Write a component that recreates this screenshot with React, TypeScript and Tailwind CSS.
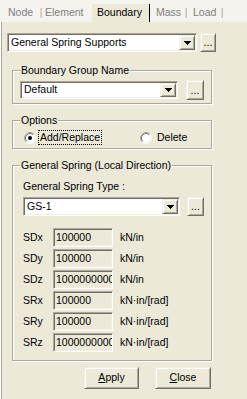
import React from "react";

const SUNKEN =
  "border border-t-[#aca899] border-l-[#aca899] border-b-white border-r-white shadow-[inset_1px_1px_0_#716f64,inset_-1px_-1px_0_#f1efe2] p-[1px]";
const RAISED =
  "border border-t-[#f1efe2] border-l-[#f1efe2] border-b-[#716f64] border-r-[#716f64] shadow-[inset_1px_1px_0_#fff,inset_-1px_-1px_0_#aca899]";
const GROUP = "relative border border-[#aca899] shadow-[inset_1px_1px_0_#fff,1px_1px_0_#fff]";

const SPRINGS = [
  { label: "SDx", value: "100000", unit: "kN/in" },
  { label: "SDy", value: "100000", unit: "kN/in" },
  { label: "SDz", value: "1000000000", unit: "kN/in" },
  { label: "SRx", value: "100000", unit: "kN·in/[rad]" },
  { label: "SRy", value: "100000", unit: "kN·in/[rad]" },
  { label: "SRz", value: "1000000000", unit: "kN·in/[rad]" },
];

function Arrow() {
  return (
    <svg width="7" height="4" viewBox="0 0 7 4" shapeRendering="crispEdges">
      <rect x="0" y="0" width="7" height="1" fill="#000" />
      <rect x="1" y="1" width="5" height="1" fill="#000" />
      <rect x="2" y="2" width="3" height="1" fill="#000" />
      <rect x="3" y="3" width="1" height="1" fill="#000" />
    </svg>
  );
}

function Combo({ value, className }: { value: string; className: string }) {
  return (
    <div className={`${SUNKEN} flex bg-white ${className}`}>
      <div className="flex flex-1 items-center overflow-hidden whitespace-nowrap pl-[2px]">{value}</div>
      <div className={`${RAISED} flex w-[16px] items-center justify-center bg-[#ece9d8]`}>
        <Arrow />
      </div>
    </div>
  );
}

function Dots({ className }: { className: string }) {
  return (
    <div className={`${RAISED} flex items-center justify-center bg-[#ece9d8] ${className}`}>
      <span className="leading-none">...</span>
    </div>
  );
}

function Radio({ checked }: { checked?: boolean }) {
  return (
    <svg width="12" height="12" viewBox="0 0 12 12">
      <circle cx="6" cy="6" r="5" fill="#fff" />
      <path d="M2.11 9.89A5.5 5.5 0 0 1 9.89 2.11" fill="none" stroke="#aca899" />
      <path d="M9.89 2.11A5.5 5.5 0 0 1 2.11 9.89" fill="none" stroke="#fff" />
      <path d="M2.82 9.18A4.5 4.5 0 0 1 9.18 2.82" fill="none" stroke="#716f64" />
      <path d="M9.18 2.82A4.5 4.5 0 0 1 2.82 9.18" fill="none" stroke="#f1efe2" />
      {checked && <circle cx="6" cy="6" r="2" fill="#000" />}
    </svg>
  );
}

function Legend({ children }: { children: React.ReactNode }) {
  return (
    <span className="absolute left-[7px] top-[-7px] bg-[#ece9d8] px-[1px] leading-[13px]">{children}</span>
  );
}

export default function App() {
  return (
    <div
      className="flex h-[399px] w-[247px] flex-col overflow-hidden bg-[#ece9d8] text-[10.5px] text-black"
      style={{ fontFamily: '"Liberation Sans", Arial, sans-serif' }}
    >
      {/* tab strip */}
      <div className="flex h-[22px] shrink-0 items-end bg-[#f4f3ee] leading-[13px] text-[#808080]">
        <span className="mb-[3px] ml-[8px] w-[30px]">Node</span>
        <span className="mb-[3px] w-[6px] text-center text-[#aca899]">|</span>
        <span className="mb-[3px] ml-[1px] w-[47px]">Element</span>
        <div className="flex h-[18px] w-[58px] items-end border-r border-black bg-[#ece9d8] pl-[5px] pb-[3px] text-black">
          Boundary
        </div>
        <span className="mb-[3px] ml-[6px] w-[27px]">Mass</span>
        <span className="mb-[3px] w-[6px] text-center text-[#aca899]">|</span>
        <span className="mb-[3px] ml-[4px] w-[26px]">Load</span>
        <span className="mb-[3px] w-[6px] text-center text-[#aca899]">|</span>
      </div>

      {/* panel */}
      <div className="flex flex-1 flex-col shadow-[inset_1px_0_0_#fff,inset_2px_0_0_#aca899]">
        <div className="ml-[7px] mt-[11px] flex items-center gap-[3px]">
          <Combo value="General Spring Supports" className="h-[19px] w-[190px]" />
          <Dots className="h-[19px] w-[16px]" />
        </div>

        <div className={`${GROUP} ml-[12px] mt-[18px] h-[34px] w-[200px]`}>
          <Legend>Boundary Group Name</Legend>
          <div className="flex items-center pl-[7px] pt-[9px]">
            <Combo value="Default" className="h-[18px] w-[158px]" />
            <Dots className="ml-[8px] h-[20px] w-[18px]" />
          </div>
        </div>

        <div className={`${GROUP} ml-[12px] mt-[16px] h-[29px] w-[200px]`}>
          <Legend>Options</Legend>
          <div className="flex items-center pl-[11px] pt-[9px] leading-[13px]">
            <div className="flex w-[116px] items-center">
              <Radio checked />
              <span className="ml-[2px] border border-dotted border-black px-[1px]">
                Add/Replace
              </span>
            </div>
            <Radio />
            <span className="ml-[5px]">Delete</span>
          </div>
        </div>

        <div className={`${GROUP} ml-[12px] mt-[16px] h-[196px] w-[200px]`}>
          <Legend>General Spring (Local Direction)</Legend>
          <div className="flex flex-col pl-[10px] pt-[14px]">
            <span className="leading-[13px]">General Spring Type :</span>
            <div className="mt-[4px] flex items-center">
              <Combo value="GS-1" className="h-[19px] w-[157px]" />
              <Dots className="ml-[7px] h-[19px] w-[17px]" />
            </div>
            <div className="mt-[12px] flex flex-col gap-[2px]">
              {SPRINGS.map((s) => (
                <div key={s.label} className="flex h-[19px] items-center">
                  <span className="w-[30px]">{s.label}</span>
                  <div
                    className={`${SUNKEN} flex h-[19px] w-[60px] items-center overflow-hidden whitespace-nowrap bg-[#ece9d8] pl-[2px]`}
                  >
                    {s.value}
                  </div>
                  <span className="ml-[7px]">{s.unit}</span>
                </div>
              ))}
            </div>
          </div>
        </div>

        <div className="ml-[84px] mt-[6px] flex gap-[16px]">
          <div className={`${RAISED} flex h-[22px] w-[55px] items-center justify-center`}>
            <span>
              <span className="underline">A</span>pply
            </span>
          </div>
          <div className={`${RAISED} flex h-[22px] w-[56px] items-center justify-center`}>
            <span>
              <span className="underline">C</span>lose
            </span>
          </div>
        </div>
      </div>
    </div>
  );
}
